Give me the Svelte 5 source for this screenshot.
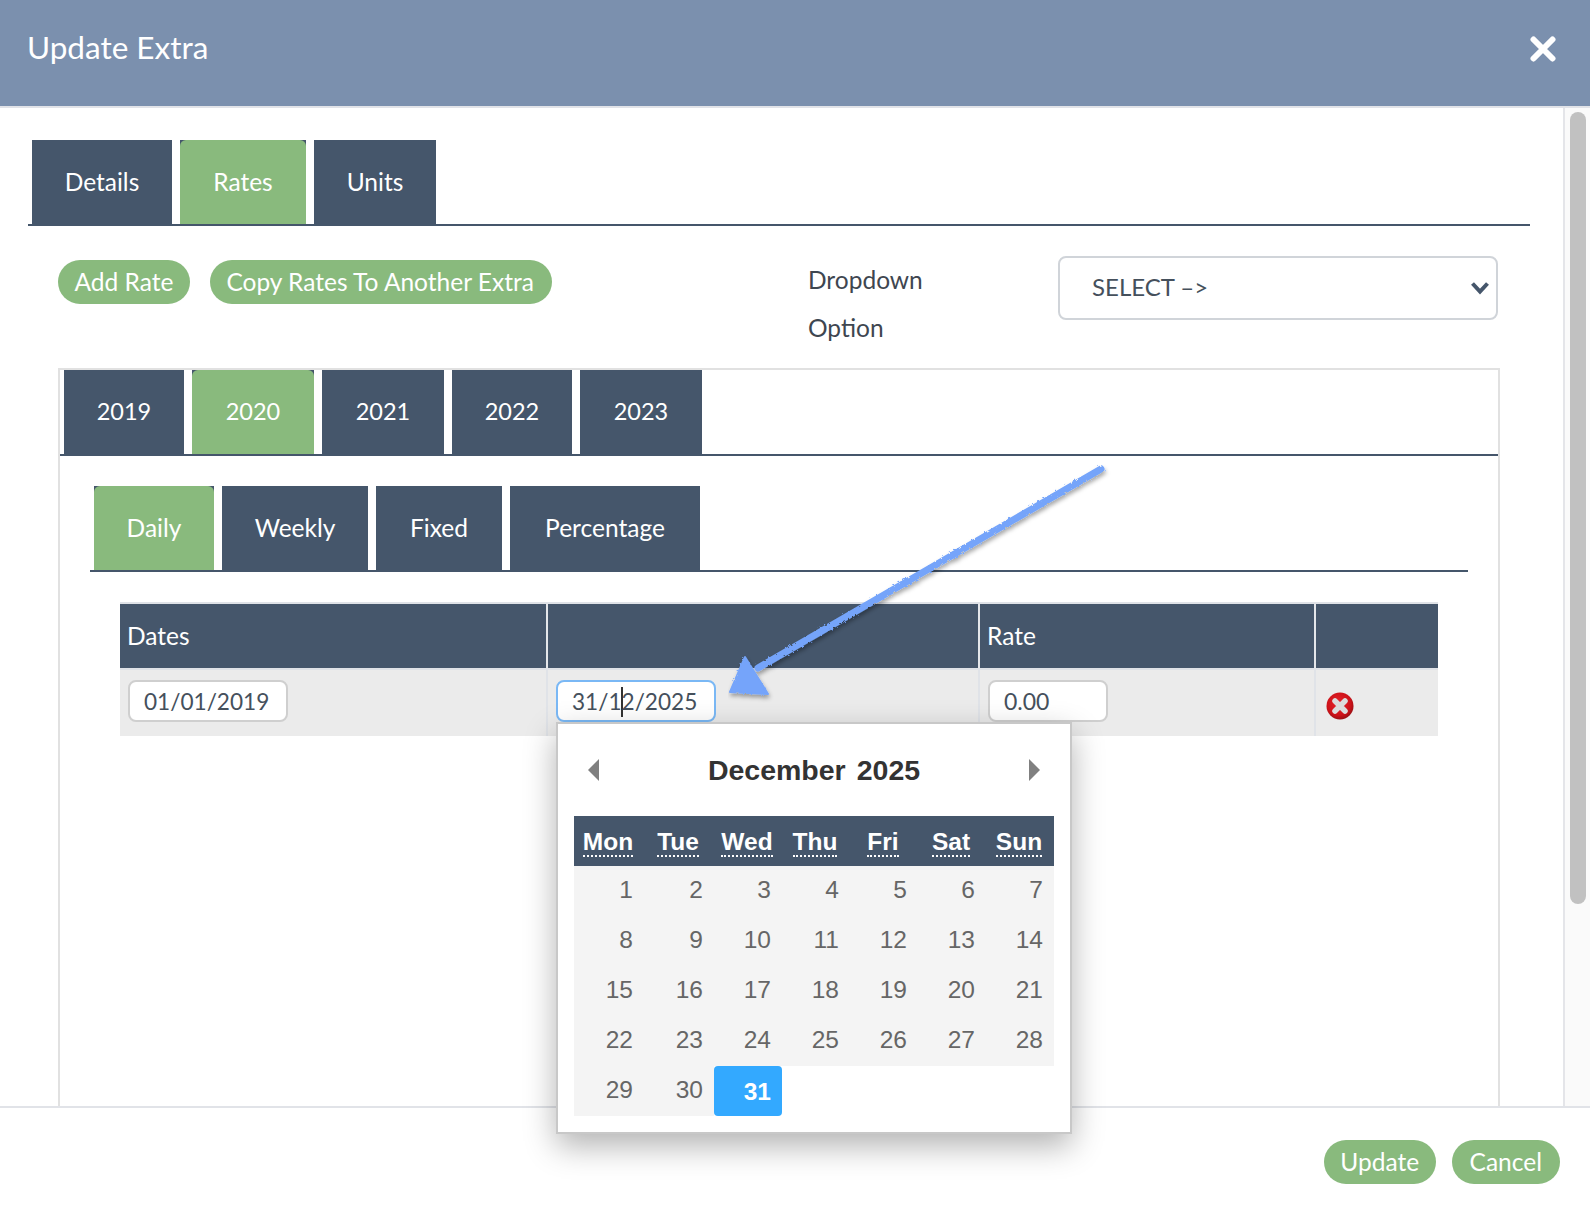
<script>
  const mainTabs = [
    { label: 'Details', width: 140 },
    { label: 'Rates', width: 126, active: true },
    { label: 'Units', width: 122 }
  ];
  const years = [
    { label: '2019', width: 120 },
    { label: '2020', width: 122, active: true },
    { label: '2021', width: 122 },
    { label: '2022', width: 120 },
    { label: '2023', width: 122 }
  ];
  const rateTabs = [
    { label: 'Daily', width: 120, active: true },
    { label: 'Weekly', width: 146 },
    { label: 'Fixed', width: 126 },
    { label: 'Percentage', width: 190 }
  ];
  const weekDays = [
    ['Mon', 'Monday'],
    ['Tue', 'Tuesday'],
    ['Wed', 'Wednesday'],
    ['Thu', 'Thursday'],
    ['Fri', 'Friday'],
    ['Sat', 'Saturday'],
    ['Sun', 'Sunday']
  ];

  // December 2025 starts on a Monday, so the weeks are plain slices of 1..31
  const weeks = [];
  for (let d = 1; d <= 31; d += 7) {
    weeks.push(Array.from({ length: 7 }, (_, i) => (d + i <= 31 ? d + i : null)));
  }
</script>

{#snippet tabs(items)}
  {#each items as tab}
    <li class="tab" style="width: {tab.width}px"><a href="#top" class:active={tab.active}>{tab.label}</a></li>
  {/each}
{/snippet}

<div class="modal">
  <header class="modal-header">
    <h1>Update Extra</h1>
    <button class="close" aria-label="Close">
      <svg viewBox="0 0 26 26" width="26" height="26">
        <path d="M3.5 3.5l19 19M22.5 3.5l-19 19" stroke="#fff" stroke-width="6" stroke-linecap="round" fill="none" />
      </svg>
    </button>
  </header>

  <div class="modal-body">
    <div class="content">
      <ul class="tabs main-tabs">{@render tabs(mainTabs)}</ul>

      <div class="toolbar">
        <div class="actions">
          <button class="pill">Add Rate</button>
          <button class="pill copy">Copy Rates To Another Extra</button>
        </div>
        <label class="dropdown-label" for="dropdown">Dropdown<br />Option</label>
        <div class="select-wrap">
          <select id="dropdown"><option>SELECT –&gt;</option></select>
          <svg class="chevron" viewBox="0 0 20 16" width="20" height="16">
            <path d="M2.5 3.5l7.5 8 7.5-8" stroke="#45566b" stroke-width="4" fill="none" />
          </svg>
        </div>
      </div>

      <section class="year-panel">
        <ul class="tabs year-tabs">{@render tabs(years)}</ul>
        <div class="year-content">
          <ul class="tabs rate-tabs">{@render tabs(rateTabs)}</ul>

          <table class="rates">
            <thead>
              <tr>
                <th class="col-from">Dates</th>
                <th class="col-to"></th>
                <th class="col-rate">Rate</th>
                <th></th>
              </tr>
            </thead>
            <tbody>
              <tr>
                <td><input class="field date" value="01/01/2019" /></td>
                <td>
                  <div class="field date focused">31/1<span class="caret"></span>2/2025</div>
                </td>
                <td><input class="field rate" value="0.00" /></td>
                <td>
                  <svg class="delete" viewBox="0 0 28 28" width="28" height="28" aria-label="Delete">
                    <defs>
                      <radialGradient id="red" cx="45%" cy="40%" r="60%">
                        <stop offset="0" stop-color="#e8242c" />
                        <stop offset="0.75" stop-color="#cc1219" />
                        <stop offset="1" stop-color="#9b1014" />
                      </radialGradient>
                    </defs>
                    <circle cx="14" cy="14" r="13.5" fill="url(#red)" />
                    <path d="M9 9l10 10M19 9L9 19" stroke="#dcdcdc" stroke-width="5.5" stroke-linecap="round" />
                  </svg>
                </td>
              </tr>
            </tbody>
          </table>
        </div>
      </section>
    </div>

    <div class="scrollbar"><div class="thumb"></div></div>
  </div>

  <footer class="modal-footer">
    <button class="pill">Update</button>
    <button class="pill cancel">Cancel</button>
  </footer>

  <!-- datepicker popup, hangs off the focused input -->
  <div class="datepicker">
    <div class="dp-title">
      <svg viewBox="0 0 12 22" width="12" height="22"><path d="M11 0v22L0 11z" fill="#808080" /></svg>
      <span class="dp-month"><span>December</span><span>2025</span></span>
      <svg viewBox="0 0 12 22" width="12" height="22"><path d="M1 0v22l11-11z" fill="#808080" /></svg>
    </div>
    <table class="dp-grid">
      <thead>
        <tr>
          {#each weekDays as [short, long], i}
            <th class:wide={i < 2}><abbr title={long}>{short}</abbr></th>
          {/each}
        </tr>
      </thead>
      <tbody>
        {#each weeks as week}
          <tr>
            {#each week as day}
              {#if day === 31}
                <td class="selected">{day}</td>
              {:else if day}
                <td>{day}</td>
              {:else}
                <td class="empty"></td>
              {/if}
            {/each}
          </tr>
        {/each}
      </tbody>
    </table>
  </div>

  <!-- hand drawn annotation on top of the screenshot -->
  <svg class="annotation" viewBox="0 0 400 260" width="400" height="260">
    <defs>
      <filter id="rough" x="-10%" y="-10%" width="120%" height="120%">
        <feTurbulence type="fractalNoise" baseFrequency="0.35" numOctaves="2" seed="4" result="noise" />
        <feDisplacementMap in="SourceGraphic" in2="noise" scale="3" result="drawn" />
        <feDropShadow in="drawn" dx="1" dy="3" stdDeviation="2" flood-color="#000" flood-opacity="0.35" />
      </filter>
    </defs>
    <g filter="url(#rough)" fill="#74a4fa" stroke="#74a4fa">
      <path d="M373 9L30 208" stroke-width="7" stroke-linecap="round" fill="none" />
      <path d="M17 197L2 232 40 234z" stroke-width="2" stroke-linejoin="round" />
    </g>
  </svg>
</div>

<style>
  :global(body) {
    margin: 0;
    background: #fff;
  }

  .modal {
    position: relative;
    width: 1590px;
    height: 1208px;
    display: grid;
    grid-template-rows: 108px 1fr 102px;
    overflow: hidden;
    font-family: Lato, "Open Sans", sans-serif;
    font-size: 24.5px;
    color: #45505c;
    background: #fff;
  }

  .modal-header {
    display: flex;
    align-items: flex-start;
    justify-content: space-between;
    padding: 0 34px 0 27px;
    background: #7b90ae;
    border-bottom: 2px solid #e1e3e8;
  }

  h1 {
    margin: 27px 0 0;
    font-size: 31.5px;
    line-height: 40px;
    font-weight: 400;
    color: #fff;
  }

  .close {
    margin-top: 36px;
    padding: 0;
    border: 0;
    background: none;
    line-height: 0;
  }

  .modal-body {
    display: flex;
    min-height: 0;
    overflow: hidden;
  }

  .content {
    flex: 1;
    padding: 32px 33px 0 28px;
    min-width: 0;
  }

  .scrollbar {
    width: 27px;
    padding: 4px 4px 0 5px;
    box-sizing: border-box;
    background: #fafafa;
    border-left: 2px solid #e4e5e9;
  }

  .thumb {
    height: 792px;
    border-radius: 8px;
    background: #c1c1c1;
  }

  .tabs {
    display: flex;
    gap: 8px;
    margin: 0;
    padding: 0 0 0 4px;
    list-style: none;
    border-bottom: 2px solid #45566b;
  }

  .tab {
    height: 84px;
    background: #45566b;
  }

  .tab a {
    display: flex;
    align-items: center;
    justify-content: center;
    height: 100%;
    padding-bottom: 2px;
    box-sizing: border-box;
    color: #fff;
    text-decoration: none;
    border-radius: 6px 6px 0 0;
  }

  .tab a.active {
    background: #89ba7d;
  }

  .toolbar {
    display: flex;
    align-items: flex-start;
    padding: 30px 32px 0 30px;
    height: 112px;
  }

  .actions {
    display: flex;
    gap: 20px;
    padding-top: 4px;
    width: 750px;
  }

  .pill {
    height: 44px;
    padding: 0 16.5px 2px;
    border: 0;
    border-radius: 22px;
    background: #89ba7d;
    color: #fff;
    font: inherit;
  }

  .pill.copy {
    padding-right: 18.5px;
  }

  .pill.cancel {
    padding: 0 18px 2px;
  }

  .dropdown-label {
    width: 250px;
    line-height: 48px;
    color: #3e4650;
  }

  .select-wrap {
    position: relative;
    flex: 1;
  }

  select {
    display: block;
    width: 100%;
    height: 64px;
    padding: 0 32px 3px;
    border: 2px solid #d0d4d9;
    border-radius: 8px;
    background: #fff;
    appearance: none;
    font: inherit;
    font-size: 24px;
    color: #45505c;
  }

  .chevron {
    position: absolute;
    right: 8px;
    top: 24px;
  }

  .year-panel {
    height: 760px;
    margin: 0 30px 0 30px;
    border: 2px solid #e1e1e1;
    border-bottom: 0;
  }

  .year-tabs {
    padding-left: 4px;
    font-size: 23.5px;
  }

  .year-content {
    padding: 30px 30px 0 30px;
  }

  .rate-tabs {
    padding-left: 4px;
  }

  .rates {
    width: 1318px;
    margin: 30px 0 0 30px;
    border-collapse: collapse;
    table-layout: fixed;
  }

  .rates th {
    height: 62px;
    padding: 0 0 2px 7px;
    background: #45566b;
    color: #fff;
    font-weight: 400;
    text-align: left;
    border-top: 2px solid #dfe2e7;
    border-left: 2px solid #e4e6ea;
    border-bottom: 2px solid #dfe2e7;
  }

  .rates th:first-child,
  .rates td:first-child {
    border-left: 0;
  }

  .col-from {
    width: 419px;
  }

  .col-to {
    width: 423px;
  }

  .col-rate {
    width: 327px;
  }

  .rates td {
    height: 61px;
    padding: 0 0 5px 8px;
    background: #ebebeb;
    border-left: 2px solid #e0e3e8;
    vertical-align: middle;
  }

  .field {
    display: block;
    box-sizing: border-box;
    height: 42px;
    padding: 0 14px;
    border: 2px solid #cfcfcf;
    border-radius: 8px;
    background: #fff;
    font: inherit;
    font-size: 23px;
    line-height: 38px;
    color: #45505c;
    outline: none;
    white-space: nowrap;
  }

  .field.date {
    width: 160px;
    padding-top: 1px;
    font-size: 22.6px;
  }

  .field.rate {
    width: 120px;
  }

  .field.focused {
    border-color: #7ab8f5;
  }

  .caret {
    display: inline-block;
    width: 2px;
    height: 30px;
    margin: 0 -1px;
    vertical-align: -7px;
    background: #333;
  }

  .delete {
    display: block;
    margin: 10px 0 0 2px;
    filter: blur(0.5px);
  }

  .modal-footer {
    display: flex;
    justify-content: flex-end;
    align-items: flex-start;
    gap: 16px;
    padding: 32px 30px 0 0;
    border-top: 2px solid #e1e3e8;
  }

  .datepicker {
    position: absolute;
    left: 556px;
    top: 722px;
    width: 516px;
    height: 412px;
    box-sizing: border-box;
    padding: 0 16px;
    border: 2px solid #c8c8c8;
    background: #fff;
    box-shadow: 0 12px 30px rgba(0, 0, 0, 0.3);
    font-family: "Liberation Sans", Arial, sans-serif;
  }

  .dp-title {
    display: flex;
    align-items: center;
    justify-content: space-between;
    height: 92px;
    padding: 0 14px;
  }

  .dp-month {
    display: flex;
    gap: 11px;
    font-size: 28.5px;
    font-weight: 700;
    color: #333;
  }

  .dp-grid {
    width: 480px;
    border-collapse: collapse;
    table-layout: fixed;
  }

  .dp-grid th {
    box-sizing: border-box;
    width: 68px;
    height: 50px;
    padding: 2px 2px 0 0;
    background: #45566b;
    color: #fff;
    font-size: 24.5px;
    font-weight: 700;
  }

  .dp-grid th.wide {
    width: 70px;
  }

  abbr {
    text-decoration: none;
    border-bottom: 2px dotted #fff;
  }

  .dp-grid td {
    height: 48px;
    padding: 0 11px 2px 0;
    background: #f4f4f4;
    color: #666;
    font-size: 24.5px;
    text-align: right;
  }

  .dp-grid td.empty {
    background: none;
  }

  .dp-grid td.selected {
    padding: 2px 11px 0 0;
    background: #33a9ff;
    border-radius: 4px;
    color: #fff;
    font-weight: 700;
  }

  .annotation {
    position: absolute;
    left: 728px;
    top: 460px;
    pointer-events: none;
  }
</style>
